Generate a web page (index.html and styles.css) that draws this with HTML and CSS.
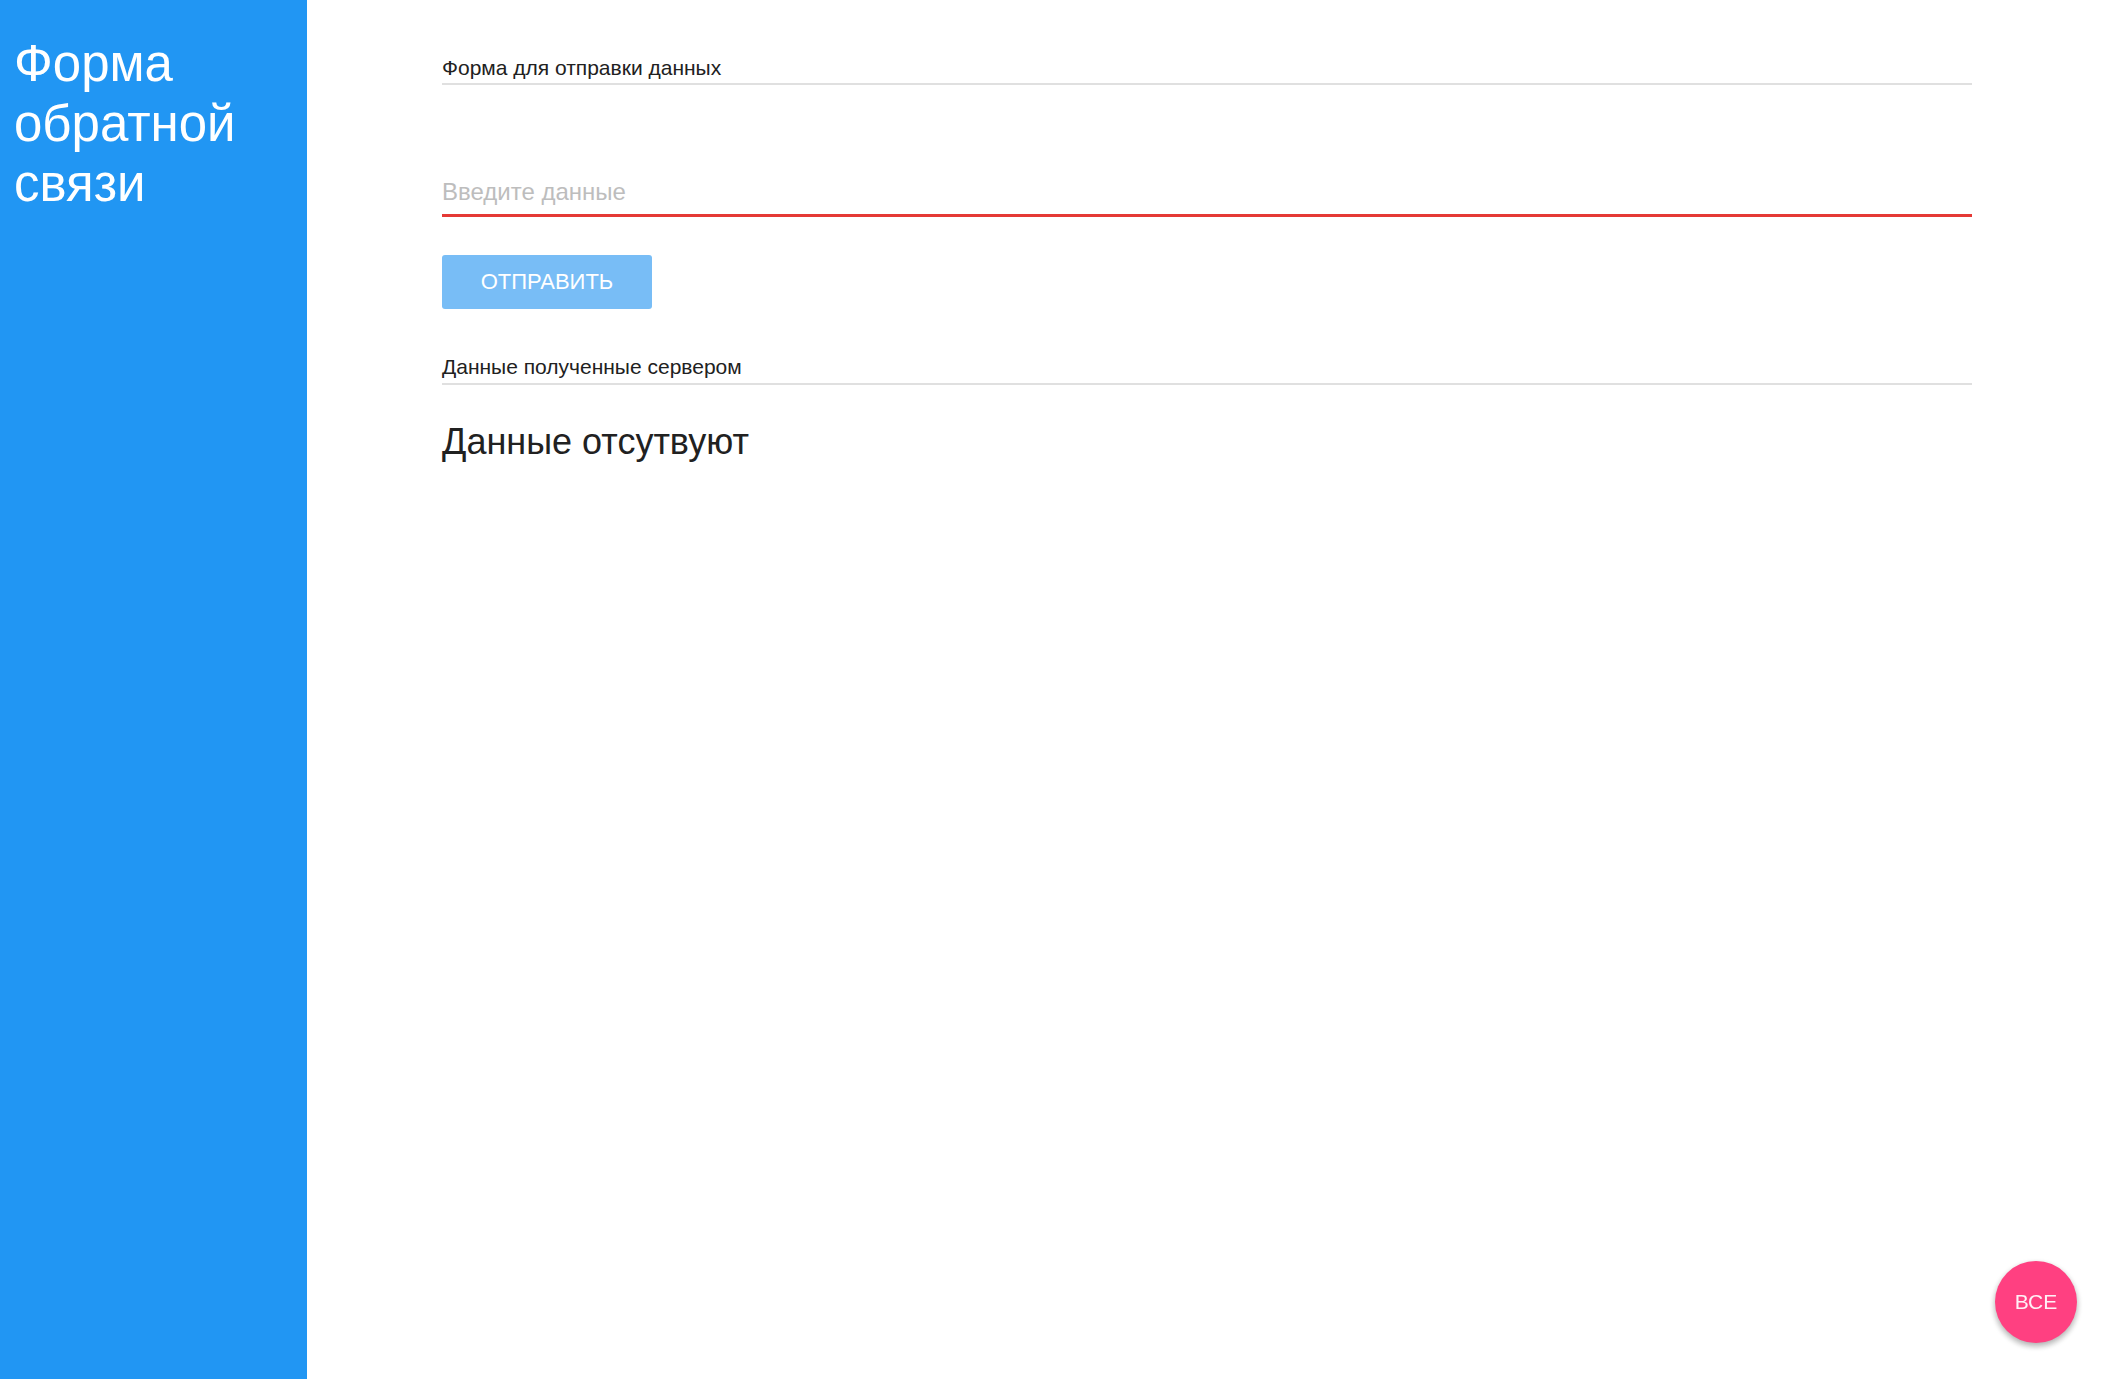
FILE: index.html
```html
<!DOCTYPE html>
<html lang="ru">
<head>
<meta charset="utf-8">
<title>Форма обратной связи</title>
<link rel="stylesheet" href="styles.css">
</head>
<body>
<div class="layout">
  <aside class="sidebar">
    <h1 class="sidebar-title">Форма обратной связи</h1>
  </aside>
  <main class="main">
    <div class="container">
      <div class="section-header">Форма для отправки данных</div>
      <input class="text-input" type="text" placeholder="Введите данные">
      <button class="submit-btn" type="button">Отправить</button>
      <div class="section-header section-header--second">Данные полученные сервером</div>
      <div class="empty-text">Данные отсутвуют</div>
    </div>
  </main>
</div>
<button class="fab" type="button">ВСЕ</button>
</body>
</html>
```

FILE: styles.css
```css
* { box-sizing: border-box; }

html, body {
  margin: 0;
  padding: 0;
  height: 100%;
}

body {
  font-family: "Liberation Sans", Arial, sans-serif;
  color: #212121;
  background: #ffffff;
}

.layout {
  display: flex;
  min-height: 100vh;
}

.sidebar {
  width: 307px;
  flex: 0 0 307px;
  background: #2196f3;
  padding: 34px 13px 0 14px;
}

.sidebar-title {
  margin: 0;
  color: #ffffff;
  font-size: 51px;
  line-height: 60px;
  font-weight: normal;
}

.main {
  flex: 1;
  min-width: 0;
}

.container {
  padding: 56px 131px 0 135px;
}

.section-header {
  font-size: 21px;
  line-height: 24px;
  padding-bottom: 3px;
  border-bottom: 2px solid #e0e0e0;
  color: #212121;
}

.section-header--second {
  margin-top: 46px;
  padding-bottom: 4px;
}

.text-input {
  display: block;
  width: 100%;
  margin-top: 93px;
  padding: 0 0 8px 0;
  border: none;
  border-bottom: 3px solid #e53935;
  outline: none;
  font-family: "Liberation Sans", Arial, sans-serif;
  font-size: 24px;
  line-height: 28px;
  height: 39px;
  color: #212121;
  background: transparent;
}

.text-input::placeholder {
  color: #bdbdbd;
}

.submit-btn {
  display: block;
  margin-top: 38px;
  width: 210px;
  height: 54px;
  border: none;
  border-radius: 3px;
  background: #78bdf6;
  color: #ffffff;
  font-family: "Liberation Sans", Arial, sans-serif;
  font-size: 22px;
  text-transform: uppercase;
}

.empty-text {
  margin-top: 36px;
  font-size: 36px;
  line-height: 42px;
  color: #212121;
}

.fab {
  position: fixed;
  right: 26px;
  bottom: 36px;
  width: 82px;
  height: 82px;
  border-radius: 50%;
  border: none;
  background: #ff4081;
  color: #fff0f6;
  font-family: "Liberation Sans", Arial, sans-serif;
  font-size: 21px;
  box-shadow: 0 3px 6px rgba(0, 0, 0, 0.16), 0 3px 6px rgba(0, 0, 0, 0.2);
}
```
